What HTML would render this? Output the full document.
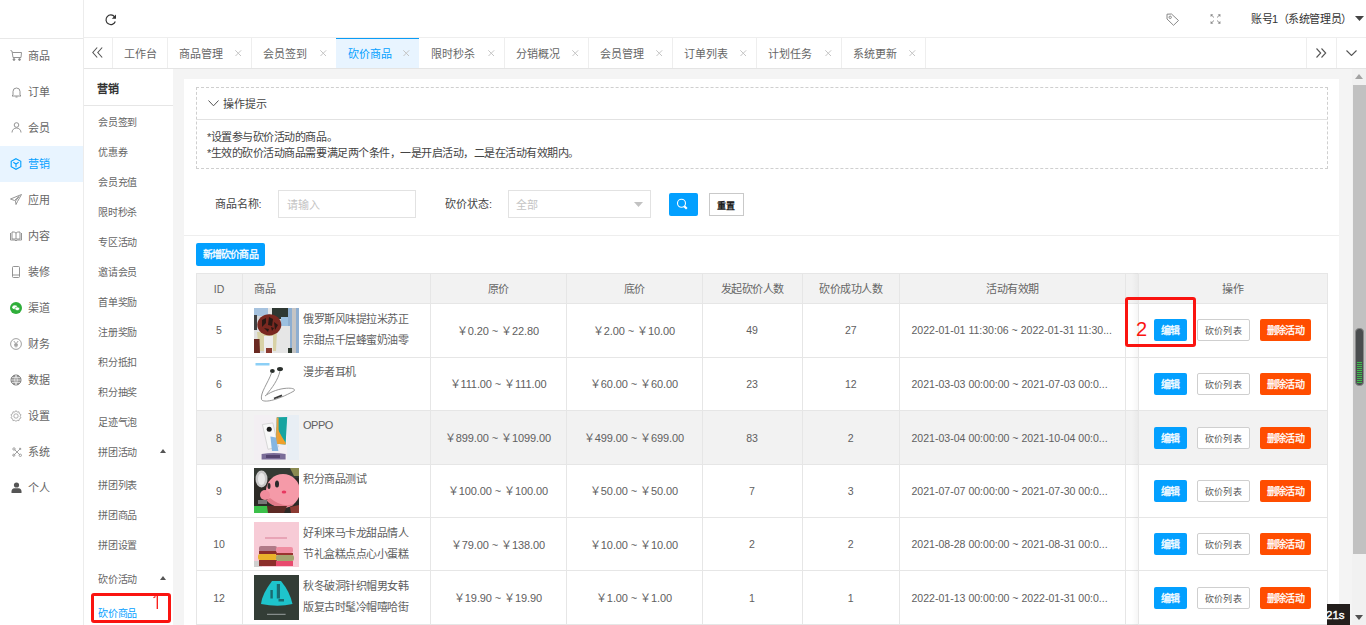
<!DOCTYPE html>
<html lang="zh-CN"><head><meta charset="utf-8"><style>
*{box-sizing:border-box;margin:0;padding:0}
html,body{width:1366px;height:625px;overflow:hidden;background:#fff;font-family:"Liberation Sans",sans-serif;color:#333}
.a{position:absolute;white-space:nowrap}
svg.a{display:block}
.mi{position:absolute;left:0;width:83px;height:36px;font-size:11px;color:#666;line-height:36px}
.mi .t{position:absolute;left:28px;top:0}
.mi svg{position:absolute}
.mi.on{background:#e8f4ff;color:#03a0ff}
.tab{position:absolute;top:0;height:30px;font-size:11px;color:#606060;line-height:30px}
.tab .t{position:absolute;left:12px;top:0}
.tab .x{position:absolute;top:0;font-size:12px;color:#bbb}
.btn{position:absolute;height:22px;line-height:24px;font-size:10px;letter-spacing:-0.8px;text-align:center;white-space:nowrap;border-radius:2px}
.b1{width:33px;background:#03a0ff;color:#fff;-webkit-text-stroke:0.3px #fff}
.b2{width:53px;background:#fff;color:#555;border:1px solid #cfcfcf;line-height:22px;font-size:9px;letter-spacing:0.2px}
.b3{width:51px;background:#ff4d00;color:#fff;-webkit-text-stroke:0.3px #fff}
.tx{position:absolute;white-space:nowrap;line-height:14px}
</style></head><body>
<div class="a" style="left:0px;top:0px;width:83px;height:625px;background:#fff"></div>
<div class="a" style="left:83px;top:0px;width:1px;height:625px;background:#ececec"></div>
<div class="a" style="left:0px;top:38px;width:83px;height:1px;background:#e8e8e8"></div>
<div class="mi" style="top:37.5px"><svg style="left:10px;top:12.5px" width="12" height="11" viewBox="0 0 12 11" fill="none" stroke="#888" stroke-width="0.9"><path d="M0.5 0.5 L2 1 L3 7.5 L11 7.5 L11.5 2.5 L2.5 2.5"/><circle cx="4" cy="9.5" r="0.9" fill="#888"/><circle cx="9.5" cy="9.5" r="0.9" fill="#888"/></svg><span class="t">商品</span></div>
<div class="mi" style="top:73.5px"><svg style="left:11px;top:13px" width="11" height="11" viewBox="0 0 11 11" fill="none" stroke="#888" stroke-width="0.9"><path d="M1 9 L2 8 L2 4.5 A3.5 3.5 0 0 1 9 4.5 L9 8 L10 9 Z"/><path d="M4.5 10 L6.5 10"/></svg><span class="t">订单</span></div>
<div class="mi" style="top:109.5px"><svg style="left:11px;top:12.5px" width="11" height="11" viewBox="0 0 11 11" fill="none" stroke="#888" stroke-width="0.9"><circle cx="5.5" cy="3" r="2.3"/><path d="M1 10.5 A4.5 4.5 0 0 1 10 10.5"/></svg><span class="t">会员</span></div>
<div class="mi on" style="top:146px"><svg style="left:10px;top:12px" width="12" height="12" viewBox="0 0 12 12" fill="none" stroke="#03a0ff" stroke-width="1.1"><path d="M6 0.7 L10.8 3.3 L10.8 8.7 L6 11.3 L1.2 8.7 L1.2 3.3 Z"/><path d="M3.3 4.3 L6 6 L8.7 4.3 M6 6 L6 9.3"/></svg><span class="t">营销</span></div>
<div class="mi" style="top:181.5px"><svg style="left:10px;top:12.5px" width="12" height="11" viewBox="0 0 12 11" fill="none" stroke="#888" stroke-width="0.9"><path d="M11.5 0.5 L0.5 5 L4.5 6.5 L9 2.5 L5.5 7 L6 10.5 L7.5 7.5 L11.5 0.5 Z"/></svg><span class="t">应用</span></div>
<div class="mi" style="top:217.5px"><svg style="left:10px;top:13px" width="12" height="11" viewBox="0 0 12 11" fill="none" stroke="#888" stroke-width="0.9"><path d="M0.5 2 L0.5 9 L5 9 L6 10 L7 9 L11.5 9 L11.5 2 M2 1 Q4.5 0.5 6 2 Q7.5 0.5 10 1 L10 8 L2 8 Z M6 2 L6 8"/></svg><span class="t">内容</span></div>
<div class="mi" style="top:253.5px"><svg style="left:11px;top:12px" width="10" height="12" viewBox="0 0 10 12" fill="none" stroke="#888" stroke-width="0.9"><rect x="1.5" y="0.5" width="7" height="11" rx="1"/><path d="M1.5 9 L8.5 9"/></svg><span class="t">装修</span></div>
<div class="mi" style="top:289.5px"><svg style="left:10px;top:12px" width="12" height="12" viewBox="0 0 12 12"><circle cx="6" cy="6" r="6" fill="#2fae3a"/><ellipse cx="4.8" cy="5.3" rx="2.6" ry="2" fill="#fff"/><ellipse cx="7.3" cy="6.8" rx="2.4" ry="1.8" fill="#fff" stroke="#2fae3a" stroke-width="0.6"/></svg><span class="t">渠道</span></div>
<div class="mi" style="top:325.5px"><svg style="left:10px;top:12px" width="12" height="12" viewBox="0 0 12 12" fill="none" stroke="#888" stroke-width="0.8"><circle cx="6" cy="6" r="5.4"/><path d="M3.8 3 L6 5.8 L8.2 3 M6 5.8 L6 9.5 M4 6.3 L8 6.3 M4 7.8 L8 7.8"/></svg><span class="t">财务</span></div>
<div class="mi" style="top:361.5px"><svg style="left:10px;top:12px" width="12" height="12" viewBox="0 0 12 12" fill="none" stroke="#777" stroke-width="1"><circle cx="6" cy="6" r="5" fill="#999" stroke="#777"/><path d="M1 6 L11 6 M2 3.5 L10 3.5 M2 8.5 L10 8.5 M6 1 Q3 6 6 11 Q9 6 6 1" stroke="#eee" stroke-width="0.7"/></svg><span class="t">数据</span></div>
<div class="mi" style="top:397.5px"><svg style="left:10px;top:12px" width="12" height="12" viewBox="0 0 12 12" fill="none" stroke="#999" stroke-width="0.8"><path d="M6 0.6 L7.2 2.2 L9.2 1.9 L9.5 3.9 L11.3 4.9 L10.4 6.7 L11.3 8.4 L9.5 9.3 L9.2 11.2 L7.2 10.9 L6 12 L4.8 10.9 L2.8 11.2 L2.5 9.3 L0.7 8.4 L1.6 6.7 L0.7 4.9 L2.5 3.9 L2.8 1.9 L4.8 2.2 Z" transform="scale(0.95) translate(0.3,0)"/><circle cx="6" cy="6" r="2.2"/></svg><span class="t">设置</span></div>
<div class="mi" style="top:433.5px"><svg style="left:11.5px;top:13px" width="10" height="10" viewBox="0 0 10 10" fill="none" stroke="#999" stroke-width="0.9"><path d="M2.5 2.5 L8 8 M8.5 1.5 L1.5 8.5"/><circle cx="2" cy="2" r="1.2"/><circle cx="8.3" cy="8.3" r="1.2"/><circle cx="1.8" cy="8.2" r="1.1"/><path d="M7.5 1 L9 2.5" stroke-width="1.4"/></svg><span class="t">系统</span></div>
<div class="mi" style="top:469.5px"><svg style="left:11px;top:12.5px" width="11" height="11" viewBox="0 0 11 11" fill="#555"><circle cx="5.5" cy="3" r="2.6"/><path d="M0.5 11 L0.5 9.5 Q0.5 6.5 3.5 6.2 L7.5 6.2 Q10.5 6.5 10.5 9.5 L10.5 11 Z"/></svg><span class="t">个人</span></div>
<div class="a" style="left:84px;top:37px;width:1282px;height:1px;background:#eeeeee"></div>
<svg class="a" style="left:105px;top:13.5px" width="13" height="12" viewBox="0 0 13 12" fill="none" stroke="#333" stroke-width="1.2"><path d="M10.3 7.5 A4.8 4.8 0 1 1 9.6 2.8"/><path d="M11 0.5 L11 4.8 L6.8 4.8 Z" fill="#333" stroke="none"/></svg>
<svg class="a" style="left:1166px;top:13px" width="14" height="13" viewBox="0 0 14 13" fill="none" stroke="#888" stroke-width="1"><path d="M1 1.2 L5.5 1 L12.5 7.5 L7.5 12.3 L1 6 Z"/><circle cx="4.2" cy="4.3" r="1.2"/></svg>
<svg class="a" style="left:1209.5px;top:14px" width="11" height="10" viewBox="0 0 11 10" fill="#888" stroke="#888" stroke-width="0.9"><path d="M4 3.5 L1.2 0.9 M7 3.5 L9.8 0.9 M4 6.5 L1.2 9.1 M7 6.5 L9.8 9.1" fill="none"/><path d="M0.5 0.3 L3.3 0.5 L0.7 3 Z M10.5 0.3 L7.7 0.5 L10.3 3 Z M0.5 9.7 L3.3 9.5 L0.7 7 Z M10.5 9.7 L7.7 9.5 L10.3 7 Z" stroke="none"/></svg>
<div class="tx" style="left:1251px;top:12px;font-size:11px;color:#333;letter-spacing:-0.45px">账号1（系统管理员）</div>
<svg class="a" style="left:1355px;top:15.5px" width="9" height="5" viewBox="0 0 9 5"><path d="M0 0 L9 0 L4.5 5 Z" fill="#444"/></svg>
<div class="a" style="left:84px;top:68px;width:1282px;height:1px;background:#e4e4e4"></div>
<div class="a" style="left:336px;top:38px;width:83px;height:30px;background:#e8f4ff"></div>
<div class="a" style="left:336px;top:37.5px;width:83px;height:1.5px;background:#0a9cf5"></div>
<div class="tx" style="left:123.5px;top:47px;font-size:11px;color:#666;line-height:14px">工作台</div>
<div class="tx" style="left:178.5px;top:47px;font-size:11px;color:#666;line-height:14px">商品管理</div>
<svg class="a" style="left:235px;top:49.5px" width="6.5" height="6.5" viewBox="0 0 6.5 6.5" fill="none" stroke="#c4c4c4" stroke-width="1"><path d="M0.3 0.3 L6.2 6.2 M6.2 0.3 L0.3 6.2"/></svg>
<div class="tx" style="left:262.5px;top:47px;font-size:11px;color:#666;line-height:14px">会员签到</div>
<svg class="a" style="left:320px;top:49.5px" width="6.5" height="6.5" viewBox="0 0 6.5 6.5" fill="none" stroke="#c4c4c4" stroke-width="1"><path d="M0.3 0.3 L6.2 6.2 M6.2 0.3 L0.3 6.2"/></svg>
<div class="tx" style="left:347.5px;top:47px;font-size:11px;color:#03a0ff;line-height:14px">砍价商品</div>
<svg class="a" style="left:403px;top:49.5px" width="6.5" height="6.5" viewBox="0 0 6.5 6.5" fill="none" stroke="#c4c4c4" stroke-width="1"><path d="M0.3 0.3 L6.2 6.2 M6.2 0.3 L0.3 6.2"/></svg>
<div class="tx" style="left:430.5px;top:47px;font-size:11px;color:#666;line-height:14px">限时秒杀</div>
<svg class="a" style="left:488px;top:49.5px" width="6.5" height="6.5" viewBox="0 0 6.5 6.5" fill="none" stroke="#c4c4c4" stroke-width="1"><path d="M0.3 0.3 L6.2 6.2 M6.2 0.3 L0.3 6.2"/></svg>
<div class="tx" style="left:515.5px;top:47px;font-size:11px;color:#666;line-height:14px">分销概况</div>
<svg class="a" style="left:572px;top:49.5px" width="6.5" height="6.5" viewBox="0 0 6.5 6.5" fill="none" stroke="#c4c4c4" stroke-width="1"><path d="M0.3 0.3 L6.2 6.2 M6.2 0.3 L0.3 6.2"/></svg>
<div class="tx" style="left:599.5px;top:47px;font-size:11px;color:#666;line-height:14px">会员管理</div>
<svg class="a" style="left:656px;top:49.5px" width="6.5" height="6.5" viewBox="0 0 6.5 6.5" fill="none" stroke="#c4c4c4" stroke-width="1"><path d="M0.3 0.3 L6.2 6.2 M6.2 0.3 L0.3 6.2"/></svg>
<div class="tx" style="left:683.5px;top:47px;font-size:11px;color:#666;line-height:14px">订单列表</div>
<svg class="a" style="left:740px;top:49.5px" width="6.5" height="6.5" viewBox="0 0 6.5 6.5" fill="none" stroke="#c4c4c4" stroke-width="1"><path d="M0.3 0.3 L6.2 6.2 M6.2 0.3 L0.3 6.2"/></svg>
<div class="tx" style="left:767.5px;top:47px;font-size:11px;color:#666;line-height:14px">计划任务</div>
<svg class="a" style="left:825px;top:49.5px" width="6.5" height="6.5" viewBox="0 0 6.5 6.5" fill="none" stroke="#c4c4c4" stroke-width="1"><path d="M0.3 0.3 L6.2 6.2 M6.2 0.3 L0.3 6.2"/></svg>
<div class="tx" style="left:852.5px;top:47px;font-size:11px;color:#666;line-height:14px">系统更新</div>
<svg class="a" style="left:909px;top:49.5px" width="6.5" height="6.5" viewBox="0 0 6.5 6.5" fill="none" stroke="#c4c4c4" stroke-width="1"><path d="M0.3 0.3 L6.2 6.2 M6.2 0.3 L0.3 6.2"/></svg>
<div class="a" style="left:112px;top:38px;width:1px;height:30px;background:#eeeeee"></div>
<div class="a" style="left:167px;top:38px;width:1px;height:30px;background:#eeeeee"></div>
<div class="a" style="left:251px;top:38px;width:1px;height:30px;background:#eeeeee"></div>
<div class="a" style="left:504px;top:38px;width:1px;height:30px;background:#eeeeee"></div>
<div class="a" style="left:588px;top:38px;width:1px;height:30px;background:#eeeeee"></div>
<div class="a" style="left:672px;top:38px;width:1px;height:30px;background:#eeeeee"></div>
<div class="a" style="left:756px;top:38px;width:1px;height:30px;background:#eeeeee"></div>
<div class="a" style="left:841px;top:38px;width:1px;height:30px;background:#eeeeee"></div>
<div class="a" style="left:925px;top:38px;width:1px;height:30px;background:#eeeeee"></div>
<div class="a" style="left:1306px;top:38px;width:1px;height:30px;background:#eeeeee"></div>
<div class="a" style="left:1336px;top:38px;width:1px;height:30px;background:#eeeeee"></div>
<svg class="a" style="left:91.5px;top:47.3px" width="11" height="11" viewBox="0 0 11 11" fill="none" stroke="#555" stroke-width="1.1"><path d="M5.2 0.5 L0.8 5.5 L5.2 10.5 M10.2 0.5 L5.8 5.5 L10.2 10.5"/></svg>
<svg class="a" style="left:1316px;top:47.5px" width="11" height="10" viewBox="0 0 11 10" fill="none" stroke="#555" stroke-width="1.1"><path d="M0.5 0.5 L4.7 5 L0.5 9.5 M5.5 0.5 L9.7 5 L5.5 9.5"/></svg>
<svg class="a" style="left:1346px;top:49.5px" width="11" height="6" viewBox="0 0 11 6" fill="none" stroke="#555" stroke-width="1.1"><path d="M0.5 0.5 L5.5 5.5 L10.5 0.5"/></svg>
<div class="a" style="left:173px;top:69px;width:1179px;height:556px;background:#f4f4f4"></div>
<div class="tx" style="left:97px;top:81.5px;font-size:11px;color:#333;font-weight:bold">营销</div>
<div class="a" style="left:84px;top:105px;width:89px;height:1px;background:#e6e6e6"></div>
<div class="tx" style="left:98px;top:115.5px;font-size:10px;color:#666;letter-spacing:-0.2px">会员签到</div>
<div class="tx" style="left:98px;top:145.5px;font-size:10px;color:#666;letter-spacing:-0.2px">优惠券</div>
<div class="tx" style="left:98px;top:175.5px;font-size:10px;color:#666;letter-spacing:-0.2px">会员充值</div>
<div class="tx" style="left:98px;top:205.5px;font-size:10px;color:#666;letter-spacing:-0.2px">限时秒杀</div>
<div class="tx" style="left:98px;top:235.5px;font-size:10px;color:#666;letter-spacing:-0.2px">专区活动</div>
<div class="tx" style="left:98px;top:265.5px;font-size:10px;color:#666;letter-spacing:-0.2px">邀请会员</div>
<div class="tx" style="left:98px;top:295.5px;font-size:10px;color:#666;letter-spacing:-0.2px">首单奖励</div>
<div class="tx" style="left:98px;top:325.5px;font-size:10px;color:#666;letter-spacing:-0.2px">注册奖励</div>
<div class="tx" style="left:98px;top:355.5px;font-size:10px;color:#666;letter-spacing:-0.2px">积分抵扣</div>
<div class="tx" style="left:98px;top:385.5px;font-size:10px;color:#666;letter-spacing:-0.2px">积分抽奖</div>
<div class="tx" style="left:98px;top:415.5px;font-size:10px;color:#666;letter-spacing:-0.2px">足迹气泡</div>
<div class="tx" style="left:98px;top:445.5px;font-size:10px;color:#666;letter-spacing:-0.2px">拼团活动</div>
<svg class="a" style="left:160px;top:449px" width="6" height="4" viewBox="0 0 6 4"><path d="M0 4 L6 4 L3 0 Z" fill="#555"/></svg>
<div class="tx" style="left:98px;top:479.0px;font-size:10px;color:#666;letter-spacing:-0.2px">拼团列表</div>
<div class="tx" style="left:98px;top:509.0px;font-size:10px;color:#666;letter-spacing:-0.2px">拼团商品</div>
<div class="tx" style="left:98px;top:539.0px;font-size:10px;color:#666;letter-spacing:-0.2px">拼团设置</div>
<div class="tx" style="left:98px;top:572.5px;font-size:10px;color:#666;letter-spacing:-0.2px">砍价活动</div>
<svg class="a" style="left:160px;top:576px" width="6" height="4" viewBox="0 0 6 4"><path d="M0 4 L6 4 L3 0 Z" fill="#555"/></svg>
<div class="tx" style="left:98px;top:606.5px;font-size:10px;color:#03a0ff;letter-spacing:-0.2px">砍价商品</div>
<div class="a" style="left:184px;top:79px;width:1155px;height:546px;background:#fff"></div>
<div class="a" style="left:196px;top:87px;width:1132px;height:82px;border:1px dashed #cfcfcf"></div>
<div class="a" style="left:197px;top:119px;width:1130px;height:1px;background:#e2e2e2"></div>
<svg class="a" style="left:208px;top:100px" width="11" height="7" viewBox="0 0 11 7" fill="none" stroke="#555" stroke-width="1"><path d="M0.5 0.5 L5.5 5.8 L10.5 0.5"/></svg>
<div class="tx" style="left:223px;top:97px;font-size:11px;color:#444;">操作提示</div>
<div class="tx" style="left:207px;top:129px;font-size:11px;color:#333;line-height:16px;letter-spacing:-0.48px;color:#444">*设置参与砍价活动的商品。<br>*生效的砍价活动商品需要满足两个条件，一是开启活动，二是在活动有效期内。</div>
<div class="tx" style="left:214.5px;top:197px;font-size:11px;color:#444;">商品名称:</div>
<div class="a" style="left:278px;top:190px;width:138px;height:28px;border:1px solid #e2e2e2"></div>
<div class="tx" style="left:287px;top:198px;font-size:11px;color:#c4c4c4;">请输入</div>
<div class="tx" style="left:445px;top:197px;font-size:11px;color:#444;">砍价状态:</div>
<div class="a" style="left:508px;top:190px;width:143px;height:28px;border:1px solid #e2e2e2"></div>
<div class="tx" style="left:516px;top:198px;font-size:11px;color:#c4c4c4;">全部</div>
<svg class="a" style="left:634px;top:202px" width="9" height="5" viewBox="0 0 9 5"><path d="M0 0 L9 0 L4.5 5 Z" fill="#c2c2c2"/></svg>
<div class="a" style="left:669px;top:193px;width:29px;height:23px;background:#03a0ff;border-radius:2px"></div>
<svg class="a" style="left:676px;top:198px" width="13" height="13" viewBox="0 0 13 13" fill="none" stroke="#fff" stroke-width="1.1"><circle cx="5.5" cy="5.2" r="4"/><path d="M8.3 8.3 L10.8 10.8" stroke-width="2.2"/></svg>
<div class="a" style="left:709px;top:193px;width:35px;height:23px;border:1px solid #c9c9c9;background:#fff"></div>
<div class="tx" style="left:717px;top:199px;font-size:9px;color:#222;font-weight:bold;letter-spacing:0.3px">重置</div>
<div class="a" style="left:184px;top:235px;width:1155px;height:1px;background:#eeeeee"></div>
<div class="a" style="left:196px;top:243px;width:69px;height:23px;background:#03a0ff;border-radius:2px"></div>
<div class="tx" style="left:202.5px;top:248px;font-size:10px;color:#fff;letter-spacing:-0.8px;-webkit-text-stroke:0.3px #fff">新增砍价商品</div>
<div class="a" style="left:196px;top:273px;width:1131.5px;height:30px;background:#f2f2f2"></div>
<div class="a" style="left:196px;top:410.3px;width:1131.5px;height:53.5px;background:#f2f2f2"></div>
<div class="a" style="left:196px;top:273px;width:1131.5px;height:1px;background:#e6e6e6"></div>
<div class="a" style="left:196px;top:303px;width:1131.5px;height:1px;background:#e6e6e6"></div>
<div class="a" style="left:196px;top:356.5px;width:1131.5px;height:1px;background:#e6e6e6"></div>
<div class="a" style="left:196px;top:410.3px;width:1131.5px;height:1px;background:#e6e6e6"></div>
<div class="a" style="left:196px;top:463.8px;width:1131.5px;height:1px;background:#e6e6e6"></div>
<div class="a" style="left:196px;top:517px;width:1131.5px;height:1px;background:#e6e6e6"></div>
<div class="a" style="left:196px;top:570.4px;width:1131.5px;height:1px;background:#e6e6e6"></div>
<div class="a" style="left:196px;top:624.2px;width:1131.5px;height:1px;background:#e6e6e6"></div>
<div class="a" style="left:196px;top:273px;width:1px;height:352px;background:#e6e6e6"></div>
<div class="a" style="left:242px;top:273px;width:1px;height:352px;background:#e6e6e6"></div>
<div class="a" style="left:430px;top:273px;width:1px;height:352px;background:#e6e6e6"></div>
<div class="a" style="left:566px;top:273px;width:1px;height:352px;background:#e6e6e6"></div>
<div class="a" style="left:702px;top:273px;width:1px;height:352px;background:#e6e6e6"></div>
<div class="a" style="left:802px;top:273px;width:1px;height:352px;background:#e6e6e6"></div>
<div class="a" style="left:899px;top:273px;width:1px;height:352px;background:#e6e6e6"></div>
<div class="a" style="left:1125px;top:273px;width:1px;height:352px;background:#e6e6e6"></div>
<div class="a" style="left:1138px;top:273px;width:1px;height:352px;background:#e6e6e6"></div>
<div class="a" style="left:1326.5px;top:273px;width:1px;height:352px;background:#e6e6e6"></div>
<div class="a" style="left:1132px;top:273px;width:6px;height:352px;background:linear-gradient(to right,rgba(0,0,0,0.0),rgba(0,0,0,0.035))"></div>
<div class="tx" style="left:69px;top:282px;width:300px;text-align:center;font-size:11px;color:#666;font-size:10.55px">ID</div>
<div class="tx" style="left:254px;top:282px;font-size:11px;color:#666;letter-spacing:-0.5px">商品</div>
<div class="tx" style="left:348px;top:282px;width:300px;text-align:center;font-size:11px;color:#666;letter-spacing:-0.5px">原价</div>
<div class="tx" style="left:484px;top:282px;width:300px;text-align:center;font-size:11px;color:#666;letter-spacing:-0.5px">底价</div>
<div class="tx" style="left:602px;top:282px;width:300px;text-align:center;font-size:11px;color:#666;letter-spacing:-0.5px">发起砍价人数</div>
<div class="tx" style="left:700.75px;top:282px;width:300px;text-align:center;font-size:11px;color:#666;letter-spacing:-0.5px">砍价成功人数</div>
<div class="tx" style="left:862.5px;top:282px;width:300px;text-align:center;font-size:11px;color:#666;letter-spacing:-0.5px">活动有效期</div>
<div class="tx" style="left:1082.75px;top:282px;width:300px;text-align:center;font-size:11px;color:#666;letter-spacing:-0.5px">操作</div>
<div class="tx" style="left:69px;top:323.75px;width:300px;text-align:center;font-size:11px;color:#606060;font-size:10.55px;margin-top:-0.5px">5</div>
<div class="a" style="left:254px;top:307.75px;width:45px;height:45px;overflow:hidden"><div style="filter:blur(0.5px)"><svg width="45" height="45" viewBox="0 0 45 45">
<rect width="45" height="45" fill="#d4d8dc"/>
<rect x="0" y="0" width="16" height="8" fill="#a6c2de"/>
<rect x="14" y="0" width="6" height="6" fill="#e6e6e6"/>
<rect x="18" y="0" width="17" height="11" fill="#2e3832"/>
<rect x="27" y="9" width="8" height="15" fill="#9cc0e0"/>
<rect x="34" y="0" width="11" height="45" fill="#8eaed0"/>
<rect x="38" y="0" width="4" height="45" fill="#c4c4c4"/>
<rect x="17" y="18" width="19" height="27" fill="#e6e6e6"/>
<rect x="0" y="7" width="3" height="16" fill="#404040"/>
<rect x="0" y="22" width="5" height="9" fill="#e0e0e0"/>
<path d="M3 24 L23 24 L22 43 L5 43 Z" fill="#d8d2a6"/>
<rect x="10" y="28" width="9" height="17" fill="#ededed"/>
<path d="M0 31 L5.5 31 L6 45 L0 45 Z" fill="#6a2a22"/>
<rect x="12" y="40" width="6" height="5" fill="#8a3a30"/>
<rect x="34" y="40" width="4" height="5" fill="#2e3a30"/>
<ellipse cx="15.3" cy="16.8" rx="12" ry="10.6" fill="#7a2820"/>
<path d="M8 12 L12 10 L12 15 L8 19 Z M15 9 L19 11 L18 18 L14 17 Z M10 20 L15 21 L14 24 Z M20 14 L24 17 L21 22 Z M17 19 L20 20 L18 23Z" fill="#2a1814"/>
</svg></div></div>
<div class="tx" style="left:303px;top:308.75px;font-size:11px;color:#606060;line-height:21px;letter-spacing:-0.5px">俄罗斯风味提拉米苏正<br>宗甜点千层蜂蜜奶油零</div>
<div class="tx" style="left:348px;top:323.75px;width:300px;text-align:center;font-size:11px;color:#606060;letter-spacing:-0.1px">￥0.20 ~ ￥22.80</div>
<div class="tx" style="left:484px;top:323.75px;width:300px;text-align:center;font-size:11px;color:#606060;letter-spacing:-0.1px">￥2.00 ~ ￥10.00</div>
<div class="tx" style="left:602px;top:323.75px;width:300px;text-align:center;font-size:11px;color:#606060;font-size:10.55px;margin-top:-0.5px">49</div>
<div class="tx" style="left:700.75px;top:323.75px;width:300px;text-align:center;font-size:11px;color:#606060;font-size:10.55px;margin-top:-0.5px">27</div>
<div class="tx" style="left:911.5px;top:323.75px;font-size:11px;color:#606060;font-size:10.55px;margin-top:-0.5px">2022-01-01 11:30:06 ~ 2022-01-31 11:30...</div>
<div class="btn b1" style="left:1154px;top:319.25px">编辑</div>
<div class="btn b2" style="left:1197px;top:319.25px">砍价列表</div>
<div class="btn b3" style="left:1260px;top:319.25px">删除活动</div>
<div class="tx" style="left:69px;top:377.4px;width:300px;text-align:center;font-size:11px;color:#606060;font-size:10.55px;margin-top:-0.5px">6</div>
<div class="a" style="left:254px;top:361.40px;width:45px;height:45px;overflow:hidden"><div style="filter:blur(0.5px)"><svg width="45" height="45" viewBox="0 0 45 45">
<rect width="45" height="45" fill="#fff"/>
<rect x="1.5" y="2" width="14" height="2.5" fill="#8ccff6"/>
<path d="M17.5 12 C14 22 6 32 7.5 38.5 C9.5 42 22 40 40 30 C42 28 38 26.5 30 27.5 C22 28.5 15 32 11 35" fill="none" stroke="#8c8c8c" stroke-width="0.9"/>
<path d="M26 10 C24 19 18 27 12.5 33.5" fill="none" stroke="#8c8c8c" stroke-width="0.9"/>
<path d="M20 37.5 L28 34.3" stroke="#3a3a3a" stroke-width="1.8"/>
<ellipse cx="18.4" cy="10" rx="2.4" ry="1.9" fill="#2a2f2c"/>
<ellipse cx="26" cy="8" rx="3" ry="2" fill="#2a2f2c"/>
</svg></div></div>
<div class="tx" style="left:303px;top:362.4px;font-size:11px;color:#606060;line-height:21px;letter-spacing:-0.5px">漫步者耳机</div>
<div class="tx" style="left:348px;top:377.4px;width:300px;text-align:center;font-size:11px;color:#606060;letter-spacing:-0.1px">￥111.00 ~ ￥111.00</div>
<div class="tx" style="left:484px;top:377.4px;width:300px;text-align:center;font-size:11px;color:#606060;letter-spacing:-0.1px">￥60.00 ~ ￥60.00</div>
<div class="tx" style="left:602px;top:377.4px;width:300px;text-align:center;font-size:11px;color:#606060;font-size:10.55px;margin-top:-0.5px">23</div>
<div class="tx" style="left:700.75px;top:377.4px;width:300px;text-align:center;font-size:11px;color:#606060;font-size:10.55px;margin-top:-0.5px">12</div>
<div class="tx" style="left:911.5px;top:377.4px;font-size:11px;color:#606060;font-size:10.55px;margin-top:-0.5px">2021-03-03 00:00:00 ~ 2021-07-03 00:0...</div>
<div class="btn b1" style="left:1154px;top:372.9px">编辑</div>
<div class="btn b2" style="left:1197px;top:372.9px">砍价列表</div>
<div class="btn b3" style="left:1260px;top:372.9px">删除活动</div>
<div class="tx" style="left:69px;top:431.05px;width:300px;text-align:center;font-size:11px;color:#606060;font-size:10.55px;margin-top:-0.5px">8</div>
<div class="a" style="left:254px;top:415.05px;width:45px;height:45px;overflow:hidden"><div style="filter:blur(0.5px)"><svg width="45" height="45" viewBox="0 0 45 45">
<rect width="45" height="45" fill="#f3eff3"/>
<rect x="33" y="0" width="12" height="45" fill="#e8eef4"/>
<path d="M8.4 9.5 L18.8 7.9 L24.4 31.9 L14 34.3 Z" fill="#f8f8f8" stroke="#cfcfcf" stroke-width="0.8"/>
<circle cx="15.2" cy="14.3" r="2.5" fill="#1c1c1c"/>
<path d="M22.8 2.3 L33.2 1.9 L31.6 29.5 L22 28.7 Z" fill="#16a4a0"/>
<path d="M22.6 12 L28 22 L31.8 28 L31.6 29.5 L22 28.7 Z" fill="#efa02a"/>
<rect x="22.6" y="2.5" width="2" height="26" fill="#e8a040"/>
<path d="M16.4 21.5 L22 22.5 L24.4 36 L18 36 Z" fill="#86b6e2"/>
<path d="M7.6 39 Q20 37 31.6 39 L31.6 44.6 L7.6 44.6 Z" fill="#7a6c98"/>
<rect x="12" y="40" width="14" height="3" fill="#544470"/>
</svg></div></div>
<div class="tx" style="left:303px;top:415.05px;font-size:11px;color:#606060;line-height:21px;letter-spacing:-0.5px">OPPO</div>
<div class="tx" style="left:348px;top:431.05px;width:300px;text-align:center;font-size:11px;color:#606060;letter-spacing:-0.1px">￥899.00 ~ ￥1099.00</div>
<div class="tx" style="left:484px;top:431.05px;width:300px;text-align:center;font-size:11px;color:#606060;letter-spacing:-0.1px">￥499.00 ~ ￥699.00</div>
<div class="tx" style="left:602px;top:431.05px;width:300px;text-align:center;font-size:11px;color:#606060;font-size:10.55px;margin-top:-0.5px">83</div>
<div class="tx" style="left:700.75px;top:431.05px;width:300px;text-align:center;font-size:11px;color:#606060;font-size:10.55px;margin-top:-0.5px">2</div>
<div class="tx" style="left:911.5px;top:431.05px;font-size:11px;color:#606060;font-size:10.55px;margin-top:-0.5px">2021-03-04 00:00:00 ~ 2021-10-04 00:0...</div>
<div class="btn b1" style="left:1154px;top:426.55px">编辑</div>
<div class="btn b2" style="left:1197px;top:426.55px">砍价列表</div>
<div class="btn b3" style="left:1260px;top:426.55px">删除活动</div>
<div class="tx" style="left:69px;top:484.4px;width:300px;text-align:center;font-size:11px;color:#606060;font-size:10.55px;margin-top:-0.5px">9</div>
<div class="a" style="left:254px;top:468.40px;width:45px;height:45px;overflow:hidden"><div style="filter:blur(0.5px)"><svg width="45" height="45" viewBox="0 0 45 45">
<rect width="45" height="45" fill="#2c2a26"/>
<rect x="0" y="0" width="45" height="10" fill="#343a34"/>
<path d="M36 0 L45 0 L45 8 L40 8 Z" fill="#8a8a50"/>
<ellipse cx="7.5" cy="11" rx="6" ry="8.5" fill="#c8c8c8"/>
<ellipse cx="7.5" cy="11" rx="3.5" ry="6" fill="#e8e8e8"/>
<circle cx="29" cy="23" r="17" fill="#f59aa8"/>
<ellipse cx="11" cy="27" rx="5" ry="5" fill="#f08c9c"/>
<path d="M12 32 Q20 42 38 38 L40 36 Q28 40 16 30 Z" fill="#e07a88"/>
<ellipse cx="15" cy="18" rx="1.5" ry="3" fill="#2a2a2a"/>
<ellipse cx="23" cy="16" rx="2" ry="3.5" fill="#2a2a2a"/>
<ellipse cx="30" cy="24" rx="2.3" ry="1.5" fill="#e83860"/>
<rect x="0" y="38" width="14" height="7" fill="#3cc04a"/>
<path d="M13 38 L33 38 L30 45 L14 45 Z" fill="#5c2a24"/>
<path d="M36 39 L45 37 L45 45 L37 45 Z" fill="#8c3a32"/>
<rect x="4" y="32" width="9" height="4" fill="#777"/>
</svg></div></div>
<div class="tx" style="left:303px;top:469.4px;font-size:11px;color:#606060;line-height:21px;letter-spacing:-0.5px">积分商品测试</div>
<div class="tx" style="left:348px;top:484.4px;width:300px;text-align:center;font-size:11px;color:#606060;letter-spacing:-0.1px">￥100.00 ~ ￥100.00</div>
<div class="tx" style="left:484px;top:484.4px;width:300px;text-align:center;font-size:11px;color:#606060;letter-spacing:-0.1px">￥50.00 ~ ￥50.00</div>
<div class="tx" style="left:602px;top:484.4px;width:300px;text-align:center;font-size:11px;color:#606060;font-size:10.55px;margin-top:-0.5px">7</div>
<div class="tx" style="left:700.75px;top:484.4px;width:300px;text-align:center;font-size:11px;color:#606060;font-size:10.55px;margin-top:-0.5px">3</div>
<div class="tx" style="left:911.5px;top:484.4px;font-size:11px;color:#606060;font-size:10.55px;margin-top:-0.5px">2021-07-07 00:00:00 ~ 2021-07-30 00:0...</div>
<div class="btn b1" style="left:1154px;top:479.9px">编辑</div>
<div class="btn b2" style="left:1197px;top:479.9px">砍价列表</div>
<div class="btn b3" style="left:1260px;top:479.9px">删除活动</div>
<div class="tx" style="left:69px;top:537.7px;width:300px;text-align:center;font-size:11px;color:#606060;font-size:10.55px;margin-top:-0.5px">10</div>
<div class="a" style="left:254px;top:521.70px;width:45px;height:45px;overflow:hidden"><div style="filter:blur(0.5px)"><svg width="45" height="45" viewBox="0 0 45 45">
<rect width="45" height="45" fill="#f7cbd6"/>
<rect x="11" y="15" width="22" height="2" fill="#e8a4b6"/>
<rect x="0" y="39" width="8" height="6" fill="#cfcfcf"/>
<rect x="5" y="24" width="18" height="6" rx="2" fill="#b07a88"/>
<rect x="5" y="29" width="18" height="3" fill="#8c2e2a"/>
<rect x="4" y="32" width="19" height="6" rx="2" fill="#eab22a"/>
<rect x="5" y="38" width="18" height="6" fill="#8c2e2a"/>
<rect x="22" y="25" width="17" height="6" rx="2" fill="#f08ea2"/>
<rect x="22" y="31" width="17" height="2" fill="#9a3430"/>
<rect x="22" y="33" width="18" height="6" rx="2" fill="#a4a470"/>
<rect x="22" y="39" width="17" height="5" fill="#e84a6e"/>
</svg></div></div>
<div class="tx" style="left:303px;top:522.7px;font-size:11px;color:#606060;line-height:21px;letter-spacing:-0.5px">好利来马卡龙甜品情人<br>节礼盒糕点点心小蛋糕</div>
<div class="tx" style="left:348px;top:537.7px;width:300px;text-align:center;font-size:11px;color:#606060;letter-spacing:-0.1px">￥79.00 ~ ￥138.00</div>
<div class="tx" style="left:484px;top:537.7px;width:300px;text-align:center;font-size:11px;color:#606060;letter-spacing:-0.1px">￥10.00 ~ ￥10.00</div>
<div class="tx" style="left:602px;top:537.7px;width:300px;text-align:center;font-size:11px;color:#606060;font-size:10.55px;margin-top:-0.5px">2</div>
<div class="tx" style="left:700.75px;top:537.7px;width:300px;text-align:center;font-size:11px;color:#606060;font-size:10.55px;margin-top:-0.5px">2</div>
<div class="tx" style="left:911.5px;top:537.7px;font-size:11px;color:#606060;font-size:10.55px;margin-top:-0.5px">2021-08-28 00:00:00 ~ 2021-08-31 00:0...</div>
<div class="btn b1" style="left:1154px;top:533.2px">编辑</div>
<div class="btn b2" style="left:1197px;top:533.2px">砍价列表</div>
<div class="btn b3" style="left:1260px;top:533.2px">删除活动</div>
<div class="tx" style="left:69px;top:591.3px;width:300px;text-align:center;font-size:11px;color:#606060;font-size:10.55px;margin-top:-0.5px">12</div>
<div class="a" style="left:254px;top:575.30px;width:45px;height:45px;overflow:hidden"><div style="filter:blur(0.5px)"><svg width="45" height="45" viewBox="0 0 45 45">
<rect width="45" height="45" fill="#333d36"/>
<path d="M7 29 Q8 19 18 6 L27 6 Q36 17 38.5 29 Q24 32.5 7 29 Z" fill="#1ec4cc"/>
<path d="M16.4 15 L18.8 15 L18.8 23.5 L16.4 23.5 Z M22.8 9 L26 9 L26 23.5 L22.8 23.5 Z M24.5 24 L30 24 L30 26.5 L24.5 26.5 Z" fill="#1a6a70"/>
<path d="M13 39.3 L31.6 39.3" stroke="#9aa0a0" stroke-width="1"/>
</svg></div></div>
<div class="tx" style="left:303px;top:576.3px;font-size:11px;color:#606060;line-height:21px;letter-spacing:-0.5px">秋冬破洞针织帽男女韩<br>版复古时髦冷帽嘻哈街</div>
<div class="tx" style="left:348px;top:591.3px;width:300px;text-align:center;font-size:11px;color:#606060;letter-spacing:-0.1px">￥19.90 ~ ￥19.90</div>
<div class="tx" style="left:484px;top:591.3px;width:300px;text-align:center;font-size:11px;color:#606060;letter-spacing:-0.1px">￥1.00 ~ ￥1.00</div>
<div class="tx" style="left:602px;top:591.3px;width:300px;text-align:center;font-size:11px;color:#606060;font-size:10.55px;margin-top:-0.5px">1</div>
<div class="tx" style="left:700.75px;top:591.3px;width:300px;text-align:center;font-size:11px;color:#606060;font-size:10.55px;margin-top:-0.5px">1</div>
<div class="tx" style="left:911.5px;top:591.3px;font-size:11px;color:#606060;font-size:10.55px;margin-top:-0.5px">2022-01-13 00:00:00 ~ 2022-01-31 00:0...</div>
<div class="btn b1" style="left:1154px;top:586.8px">编辑</div>
<div class="btn b2" style="left:1197px;top:586.8px">砍价列表</div>
<div class="btn b3" style="left:1260px;top:586.8px">删除活动</div>
<div class="a" style="left:1124.7px;top:297px;width:71px;height:50px;border:3px solid #fa1410;border-radius:3px"></div>
<div class="tx" style="left:1136px;top:317px;font-size:20px;color:#fa1410;line-height:24px">2</div>
<div class="a" style="left:91px;top:593.3px;width:80px;height:30.2px;border:3px solid #fa1410;border-radius:3px"></div>
<svg class="a" style="left:152px;top:595px" width="8" height="15" viewBox="0 0 8 15" fill="none" stroke="#fa1410" stroke-width="1.3"><path d="M5.3 0.5 L5.3 14 M1.5 2.8 L3.5 1.5"/></svg>
<div class="a" style="left:1352px;top:69px;width:14px;height:556px;background:#f1f1f1"></div>
<div class="a" style="left:1352.5px;top:85px;width:13.5px;height:469px;background:#c1c1c1"></div>
<svg class="a" style="left:1354.5px;top:74px" width="8" height="5" viewBox="0 0 8 5"><path d="M0 5 L8 5 L4 0 Z" fill="#a3a3a3"/></svg>
<svg class="a" style="left:1355px;top:615px" width="8" height="5" viewBox="0 0 8 5"><path d="M0 0 L8 0 L4 5 Z" fill="#505050"/></svg>
<div class="a" style="left:1355px;top:328px;width:9px;height:58px;background:#4a4d4f;border-radius:4px;border:1px solid #888"></div>
<div class="a" style="left:1357px;top:362px;width:5px;height:22px;background:repeating-linear-gradient(#3cbe4a 0 1px,#4a4d4f 1px 2px)"></div>
<div class="a" style="left:1327px;top:604px;width:23px;height:21px;background:#231e1c;color:#fff;font-size:11.5px;-webkit-text-stroke:0.4px #fff;line-height:22px;overflow:hidden;text-indent:-1px;letter-spacing:0px">21s</div>
</body></html>
